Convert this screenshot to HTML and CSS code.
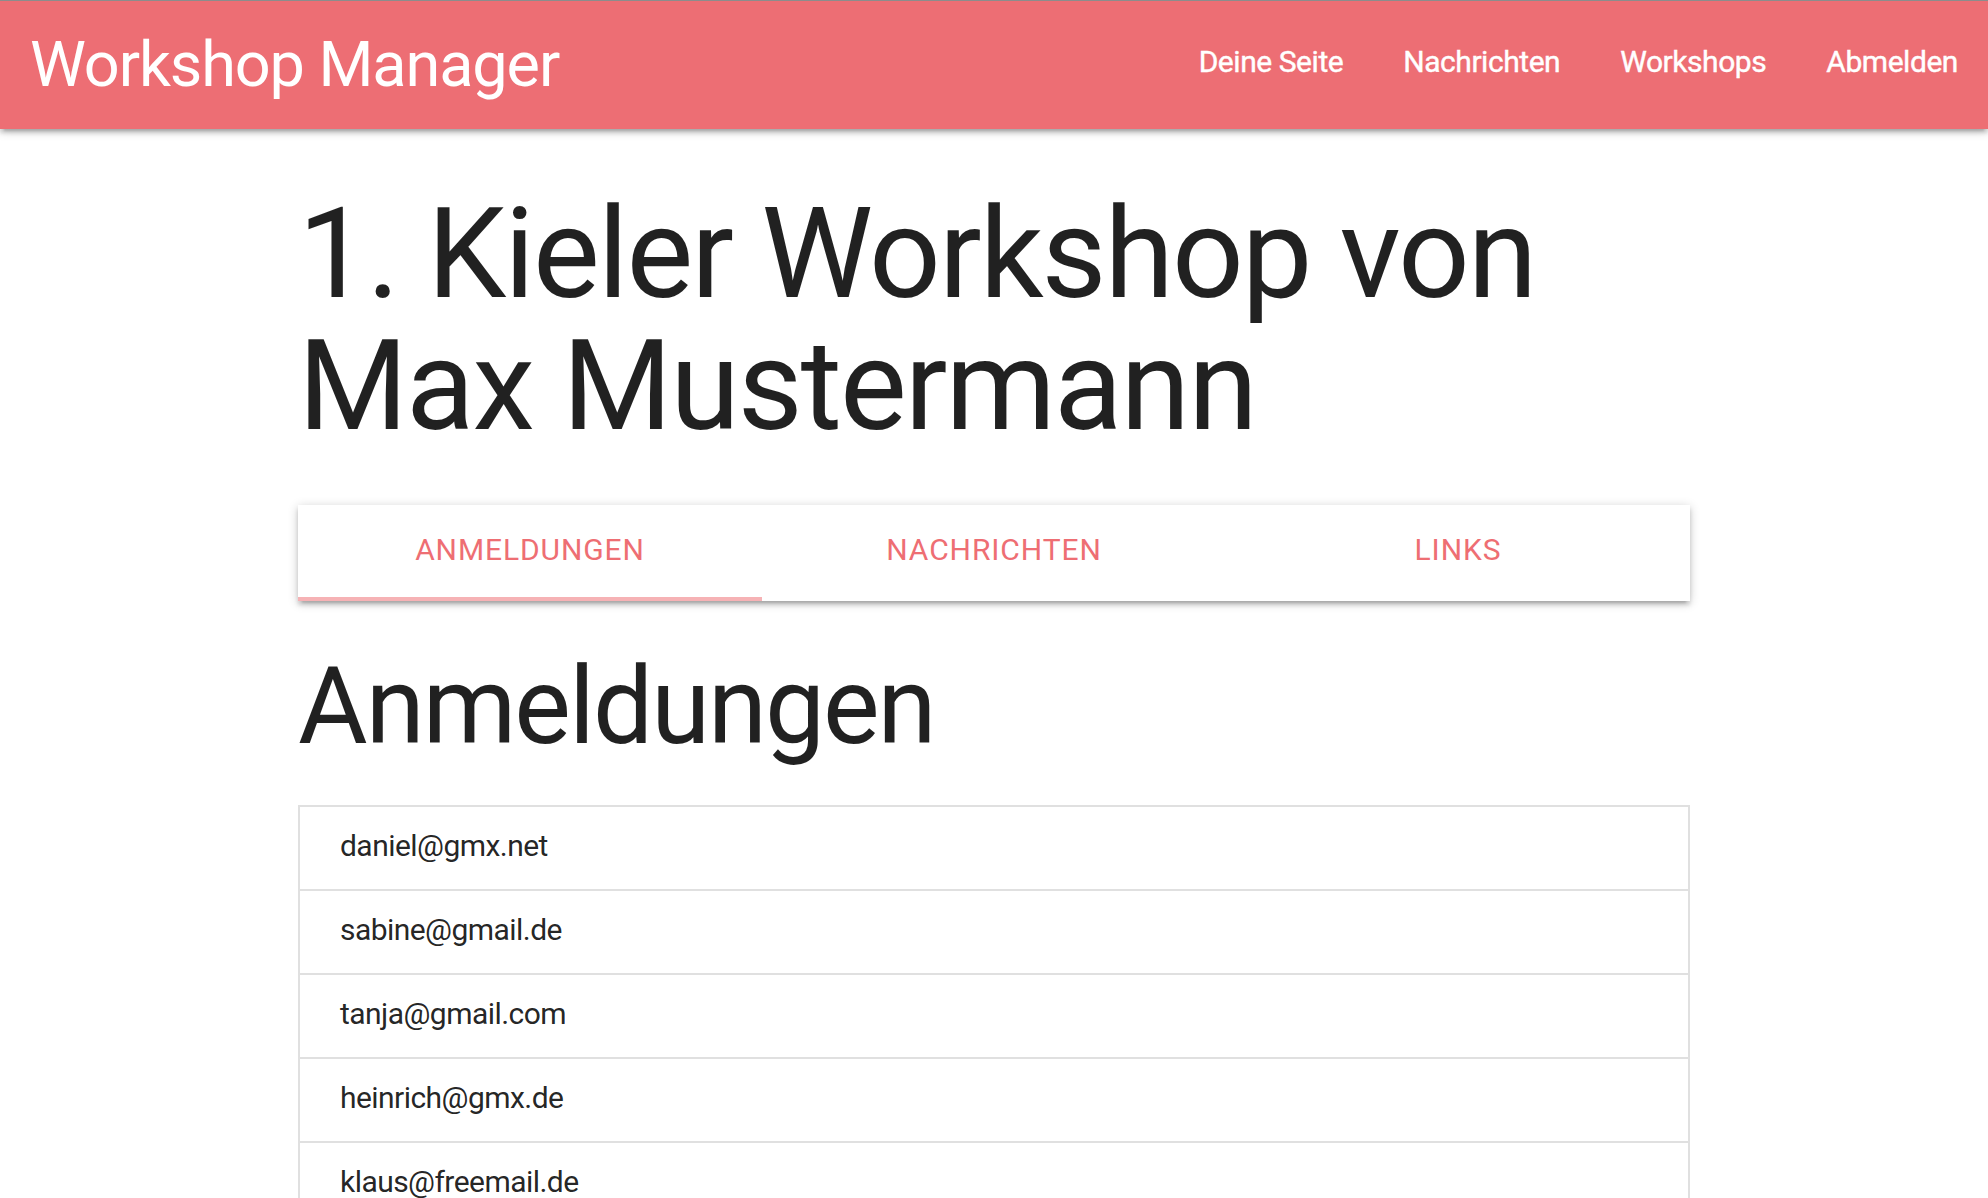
FILE: index.html
```html
<!DOCTYPE html>
<html lang="de">
<head>
<meta charset="utf-8">
<title>Workshop Manager</title>
<link rel="stylesheet" href="styles.css">
</head>
<body>
<header class="navbar">
  <a class="brand" href="#">Workshop Manager</a>
  <nav class="nav-links">
    <a href="#">Deine Seite</a>
    <a href="#">Nachrichten</a>
    <a href="#">Workshops</a>
    <a href="#">Abmelden</a>
  </nav>
</header>
<main class="container">
  <h1 class="title">1. Kieler Workshop von<br>Max Mustermann</h1>
  <div class="tabs">
    <a class="tab active" href="#">ANMELDUNGEN</a>
    <a class="tab" href="#">NACHRICHTEN</a>
    <a class="tab" href="#">LINKS</a>
  </div>
  <h2 class="section-title">Anmeldungen</h2>
  <ul class="collection">
    <li class="collection-item">daniel@gmx.net</li>
    <li class="collection-item">sabine@gmail.de</li>
    <li class="collection-item">tanja@gmail.com</li>
    <li class="collection-item">heinrich@gmx.de</li>
    <li class="collection-item">klaus@freemail.de</li>
  </ul>
</main>
</body>
</html>
```

FILE: styles.css
```css
html, body {
  margin: 0;
  padding: 0;
  background: #ffffff;
}

body {
  font-family: Roboto, "Noto Sans", sans-serif;
  color: rgba(0, 0, 0, 0.87);
  border-top: 1px solid #8c8c8c;
}

a {
  text-decoration: none;
}

.navbar {
  height: 128px;
  background: #ed6e74;
  display: flex;
  align-items: flex-start;
  justify-content: space-between;
  box-shadow: 0 4px 4px 0 rgba(0, 0, 0, 0.14), 0 6px 2px -4px rgba(0, 0, 0, 0.12), 0 2px 10px 0 rgba(0, 0, 0, 0.2);
  position: relative;
  z-index: 2;
}

.brand {
  color: #ffffff;
  font-size: 63px;
  line-height: 128px;
  letter-spacing: -1.1px;
  padding-left: 30px;
}

.nav-links {
  display: flex;
}

.nav-links a {
  display: block;
  color: #ffffff;
  font-size: 30px;
  line-height: 122px;
  letter-spacing: -0.45px;
  padding: 0 30px;
  -webkit-text-stroke: 0.4px #ffffff;
}

.container {
  width: 1392px;
  margin: 0 auto;
}

.title {
  font-size: 126px;
  font-weight: 400;
  line-height: 132px;
  margin: 59px 0 53px;
  letter-spacing: -2px;
}

.tabs {
  display: grid;
  grid-template-columns: repeat(3, 1fr);
  height: 96px;
  background: #ffffff;
  box-shadow: 0 4px 4px 0 rgba(0, 0, 0, 0.14), 0 6px 2px -4px rgba(0, 0, 0, 0.12), 0 2px 10px 0 rgba(0, 0, 0, 0.2);
}

.tab {
  color: #ee6e73;
  font-size: 30px;
  line-height: 89px;
  height: 96px;
  letter-spacing: 0.9px;
  text-align: center;
  box-sizing: border-box;
}

.tab.active {
  box-shadow: inset 0 -4px 0 #f6b2b5;
}

.section-title {
  font-size: 106.8px;
  font-weight: 400;
  line-height: 118px;
  letter-spacing: -2px;
  margin: 47px 0 39px;
}

.collection {
  list-style: none;
  margin: 0;
  padding: 0;
  border: 2px solid #e0e0e0;
}

.collection-item {
  font-size: 30px;
  line-height: 42px;
  letter-spacing: -0.55px;
  padding: 18px 40px 22px;
  border-bottom: 2px solid #e0e0e0;
}

.collection-item:last-child {
  border-bottom: none;
}
```
